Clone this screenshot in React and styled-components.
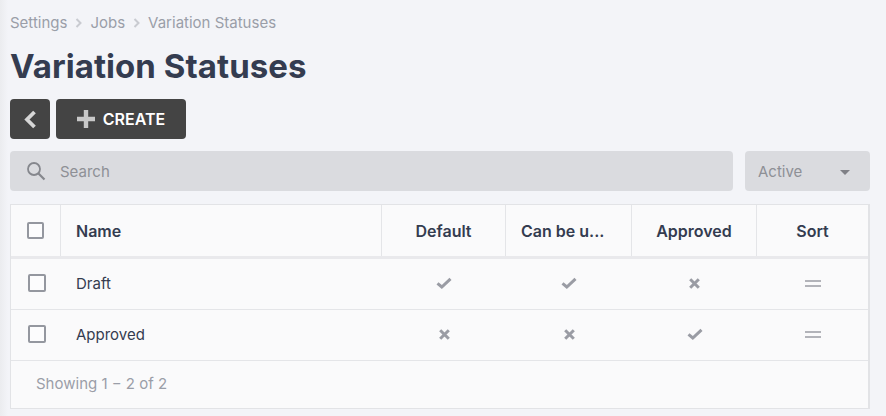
import styled, { createGlobalStyle } from 'styled-components';

const GlobalStyle = createGlobalStyle`
  html, body {
    margin: 0;
    padding: 0;
    background: #f3f4f8;
    font-family: 'Inter', 'Liberation Sans', sans-serif;
  }
  * { box-sizing: border-box; }
`;

const Page = styled.div`
  width: 886px;
  height: 416px;
  padding: 14px 16px 0 10px;
  overflow: hidden;
  background: linear-gradient(to right, #ebecef 0, #f3f4f8 8px);
`;

const Breadcrumbs = styled.nav`
  display: flex;
  align-items: center;
  height: 18px;
  font-size: 15px;
  color: #9a9ea8;
`;

const Crumb = styled.span`
  line-height: 18px;
`;

const Separator = styled.svg`
  width: 7px;
  height: 10px;
  margin: 0 8px;
`;

const Title = styled.h1`
  margin: 14px 0 0;
  font-size: 33px;
  line-height: 40px;
  font-weight: 700;
  letter-spacing: 0.06px;
  color: #343c50;
`;

const Toolbar = styled.div`
  display: flex;
  gap: 6px;
  margin-top: 13px;
`;

const DarkButton = styled.button`
  display: flex;
  align-items: center;
  justify-content: center;
  gap: 8px;
  height: 40px;
  width: ${(p) => p.$width}px;
  padding: 0;
  border: none;
  border-radius: 4px;
  background: #444444;
  color: #ffffff;
  font-family: inherit;
  font-size: 16px;
  font-weight: 600;
`;

const Filters = styled.div`
  display: flex;
  gap: 12px;
  margin-top: 12px;
`;

const SearchBox = styled.div`
  display: flex;
  align-items: center;
  flex: 1;
  height: 40px;
  padding-left: 16px;
  border-radius: 4px;
  background: #dadbdf;
`;

const SearchText = styled.span`
  margin-left: 14px;
  font-size: 15px;
  color: #8e9096;
`;

const SelectBox = styled.div`
  display: flex;
  align-items: center;
  justify-content: space-between;
  width: 125px;
  height: 40px;
  padding: 0 20px 0 13px;
  border-radius: 4px;
  background: #dadbdf;
  font-size: 15px;
  color: #8e9096;
`;

const Caret = styled.span`
  width: 0;
  height: 0;
  margin-top: 2px;
  border-left: 5px solid transparent;
  border-right: 5px solid transparent;
  border-top: 5px solid #7f8086;
`;

const Table = styled.div`
  margin-top: 13px;
  height: 205px;
  border: 1px solid #e2e3e6;
  border-right-width: 2px;
  background: #fafafb;
`;

const Row = styled.div`
  display: grid;
  grid-template-columns: 50px 321px 124px 126px 125px 112px;
  height: ${(p) => p.$height}px;
  border-bottom: ${(p) => p.$border}px solid ${(p) => (p.$border > 1 ? '#e9e9ec' : '#e4e5e8')};
`;

const HeadCell = styled.div`
  display: flex;
  align-items: center;
  justify-content: ${(p) => (p.$left ? 'flex-start' : 'center')};
  padding: 0 ${(p) => (p.$left ? 15 : 8)}px;
  border-right: 1px solid ${(p) => (p.$last ? 'transparent' : '#e4e5e8')};
  font-size: 16px;
  font-weight: 600;
  color: #343c50;
  white-space: nowrap;
`;

const Cell = styled.div`
  display: flex;
  align-items: center;
  justify-content: ${(p) => (p.$left ? 'flex-start' : 'center')};
  padding-left: ${(p) => (p.$left ? 15 : 0)}px;
  padding-bottom: 2px;
  font-size: 15px;
  color: #343c50;
`;

const Checkbox = styled.span`
  display: block;
  width: ${(p) => (p.$head ? 17 : 18)}px;
  height: ${(p) => (p.$head ? 17 : 18)}px;
  margin-left: ${(p) => (p.$head ? 1 : 2)}px;
  border: 2px solid #94979f;
  border-radius: 2px;
  background: #fcfcfd;
`;

const Footer = styled.div`
  display: flex;
  align-items: center;
  height: 45px;
  padding-left: 25px;
  font-size: 15px;
  color: #9a9ea8;
`;

const ICON = '#9a9ca4';

const Chevron = () => (
  <Separator viewBox="0 0 7 10">
    <path d="M1.5 1 L5.5 5 L1.5 9" fill="none" stroke="#c9cbd1" strokeWidth="2" />
  </Separator>
);

const Check = () => (
  <svg width="16" height="12" viewBox="0 0 16 12">
    <path d="M1.5 6.3 L5.8 10 L14.5 1.8" fill="none" stroke={ICON} strokeWidth="3" />
  </svg>
);

const Cross = () => (
  <svg width="11" height="11" viewBox="0 0 11 11">
    <path d="M1.2 1.2 L9.8 9.8 M9.8 1.2 L1.2 9.8" fill="none" stroke={ICON} strokeWidth="3" />
  </svg>
);

const Grip = () => (
  <svg width="16" height="7" viewBox="0 0 16 7">
    <path d="M0 1 H16 M0 6 H16" fill="none" stroke={ICON} strokeWidth="1.6" />
  </svg>
);

const marks = { yes: <Check />, no: <Cross /> };

const rows = [
  { name: 'Draft', values: ['yes', 'yes', 'no'] },
  { name: 'Approved', values: ['no', 'no', 'yes'] },
];

export default function App() {
  return (
    <Page>
      <GlobalStyle />
      <Breadcrumbs>
        <Crumb>Settings</Crumb>
        <Chevron />
        <Crumb>Jobs</Crumb>
        <Chevron />
        <Crumb>Variation Statuses</Crumb>
      </Breadcrumbs>
      <Title>Variation Statuses</Title>
      <Toolbar>
        <DarkButton $width={40} aria-label="Back">
          <svg width="13" height="19" viewBox="0 0 13 19">
            <path d="M10.5 2 L3 9.5 L10.5 17" fill="none" stroke="#d6d6d6" strokeWidth="3.8" />
          </svg>
        </DarkButton>
        <DarkButton $width={130}>
          <svg width="18" height="18" viewBox="0 0 18 18">
            <path d="M9 0 V18 M0 9 H18" fill="none" stroke="#c8c8c8" strokeWidth="4.4" />
          </svg>
          CREATE
        </DarkButton>
      </Toolbar>
      <Filters>
        <SearchBox>
          <svg width="20" height="20" viewBox="0 0 20 20">
            <circle cx="8" cy="8" r="6" fill="none" stroke="#85878d" strokeWidth="1.8" />
            <path d="M12.5 12.5 L18.5 18.5" fill="none" stroke="#85878d" strokeWidth="2.2" />
          </svg>
          <SearchText>Search</SearchText>
        </SearchBox>
        <SelectBox>
          Active
          <Caret />
        </SelectBox>
      </Filters>
      <Table>
        <Row $height={54} $border={3}>
          <HeadCell $left>
            <Checkbox $head />
          </HeadCell>
          <HeadCell $left>Name</HeadCell>
          <HeadCell>Default</HeadCell>
          <HeadCell $left>Can be u...</HeadCell>
          <HeadCell>Approved</HeadCell>
          <HeadCell $last>Sort</HeadCell>
        </Row>
        {rows.map((row) => (
          <Row key={row.name} $height={51} $border={1}>
            <Cell $left>
              <Checkbox />
            </Cell>
            <Cell $left>{row.name}</Cell>
            {row.values.map((value, i) => (
              <Cell key={i}>{marks[value]}</Cell>
            ))}
            <Cell>
              <Grip />
            </Cell>
          </Row>
        ))}
        <Footer>Showing 1 − 2 of 2</Footer>
      </Table>
    </Page>
  );
}
